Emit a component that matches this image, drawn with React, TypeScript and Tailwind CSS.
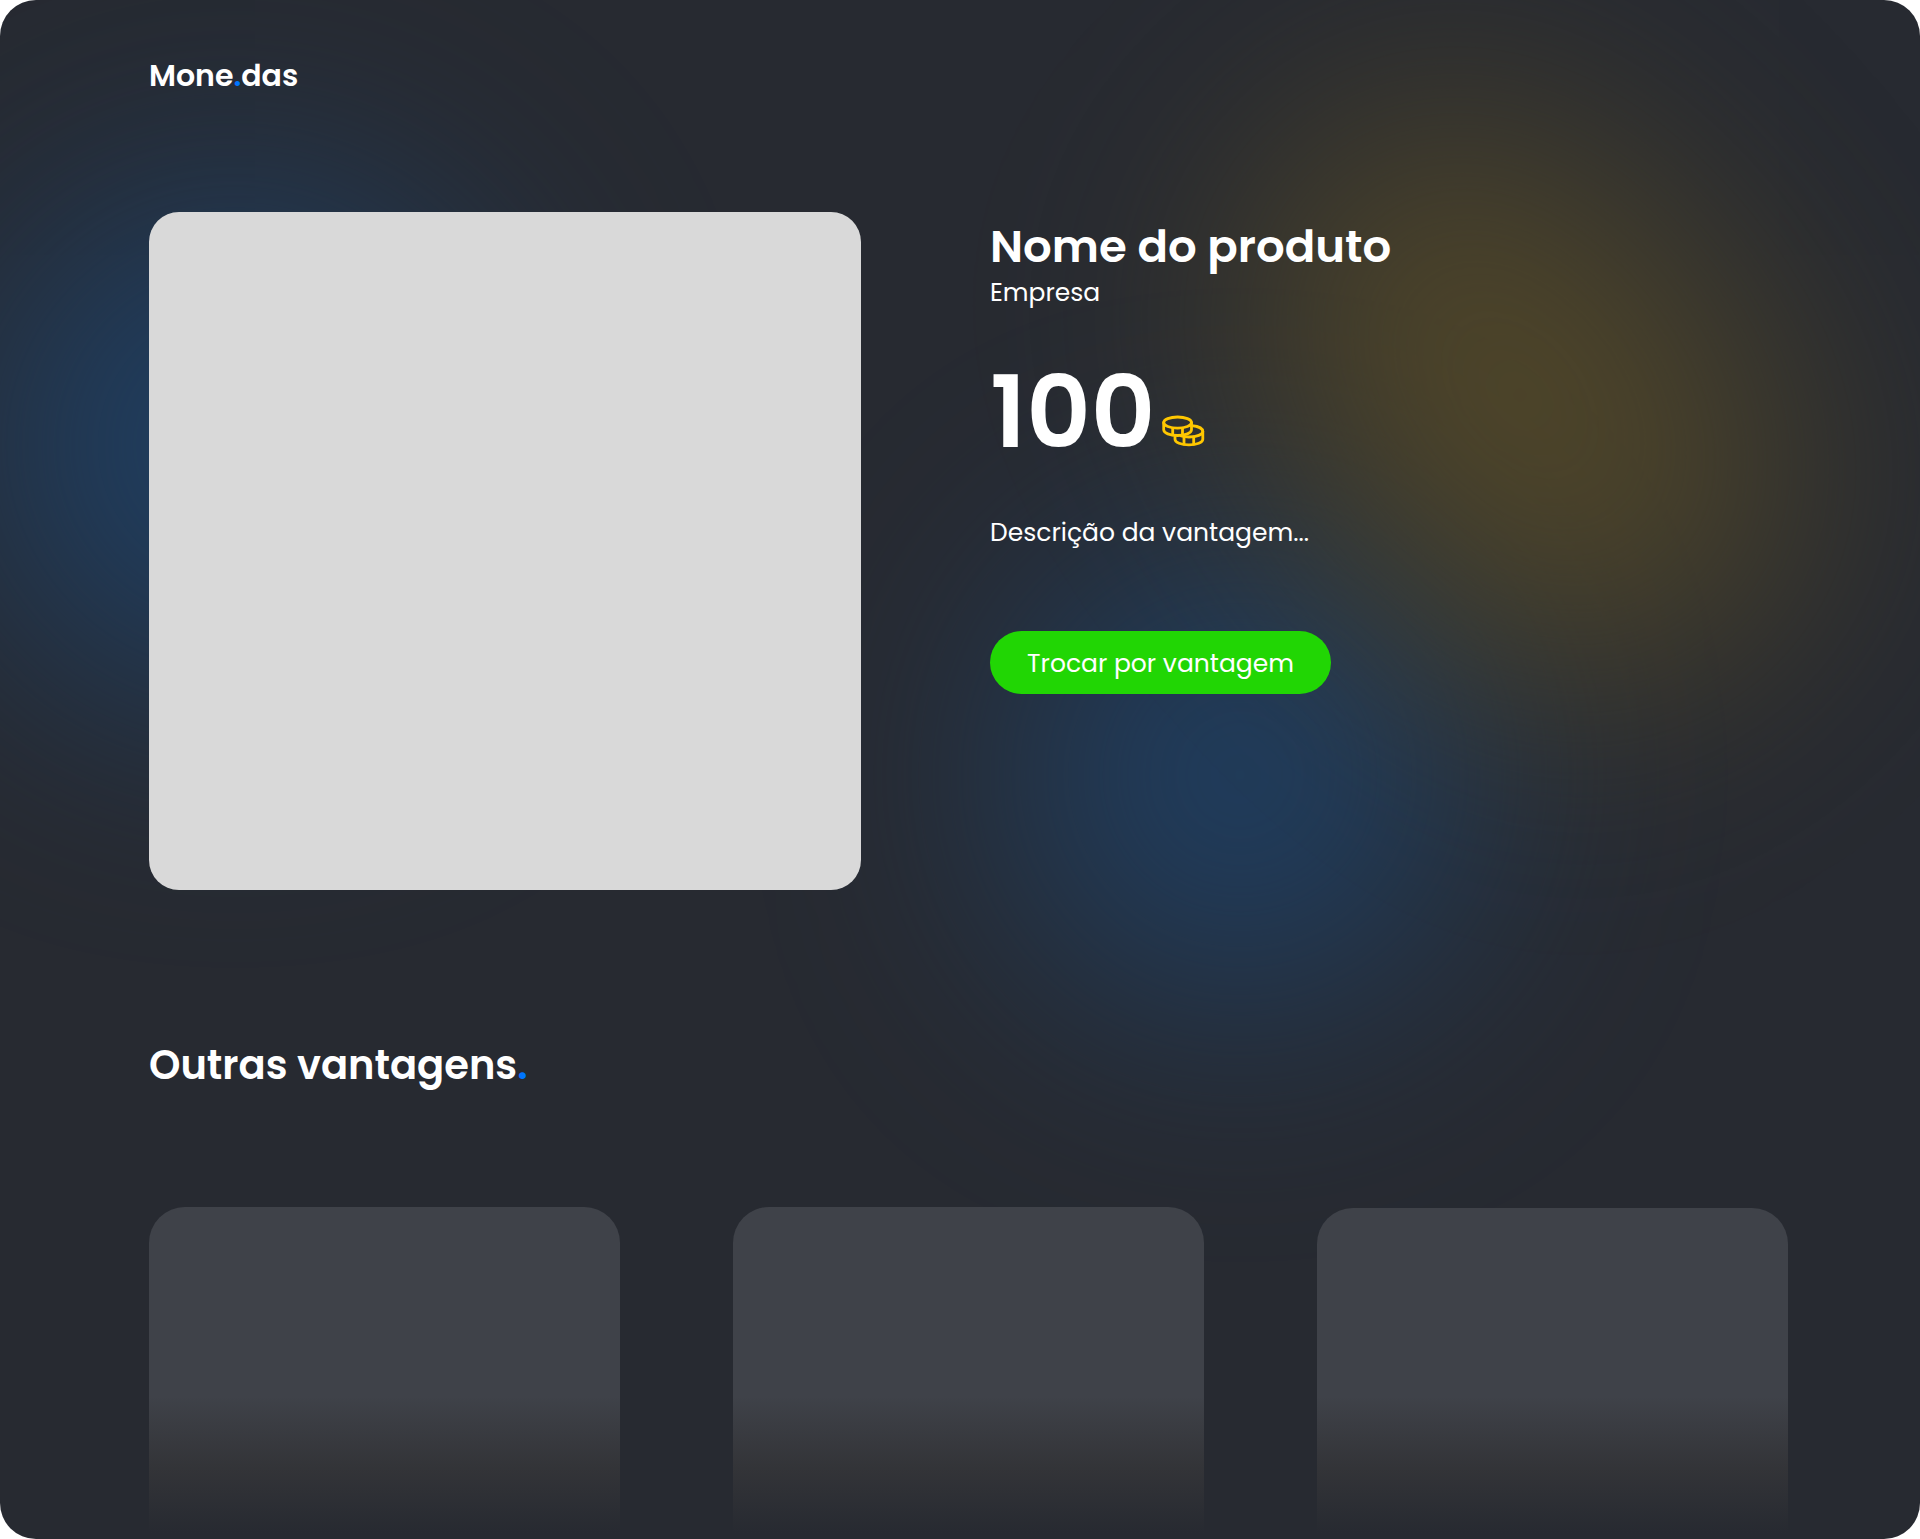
const fontFamily = "font-['Poppins','Inter',sans-serif]";

function Glow({ className }: { className: string }) {
  return <div className={`pointer-events-none absolute rounded-full ${className}`} />;
}

function CoinsIcon() {
  return (
    <svg
      viewBox="0 0 43 32"
      className="h-8 w-[43px] shrink-0"
      fill="none"
      stroke="#ffc700"
      strokeWidth="2.8"
      strokeLinejoin="round"
      strokeLinecap="round"
    >
      <ellipse cx="15.600" cy="7.600" rx="13.900" ry="5.600" />
      <path d="M1.700 7.600v7.200c0 3.200 6.200 5.700 13.900 5.700s13.900-2.500 13.900-5.700V7.600" />
      <path d="M10.700 13.200v6.600M20.500 13.200v6.600" />
      <path d="M29.700 10.700c6.500.6 11.100 2.900 11.100 5.700 0 3.100-6.200 5.600-13.900 5.600-2.900 0-5.600-.4-7.800-1" />
      <path d="M13 20.800v3.400c0 3.200 6.200 5.700 13.900 5.700s13.900-2.500 13.900-5.700v-7.800" />
      <path d="M22 22v7M31.700 22v7" />
    </svg>
  );
}

export default function App() {
  return (
    <div className="bg-white">
      <main
        className={`relative isolate flex h-[1539px] w-[1920px] flex-col overflow-hidden rounded-[36px] bg-[#272a31] px-[149px] text-white ${fontFamily}`}
      >
        <Glow className="-z-10 -left-[20px] top-[190px] h-[510px] w-[510px] bg-[#1c4674] opacity-75 blur-[130px]" />
        <Glow className="-z-10 left-[1010px] top-[545px] h-[460px] w-[460px] bg-[#1c4674] opacity-70 blur-[125px]" />
        <Glow className="-z-10 left-[1210px] top-[190px] h-[410px] w-[620px] rotate-[50deg] bg-[#5d4f26] opacity-75 blur-[125px]" />

        <header className="flex h-[212px] shrink-0 items-start pt-[57px]">
          <span className="text-[30px] leading-[37px] font-semibold">
            Mone<span className="text-[#0075ff]">.</span>das
          </span>
        </header>

        <section className="flex h-[678px] shrink-0 gap-[129px]">
          <div className="h-[678px] w-[712px] shrink-0 rounded-[30px] bg-[#d9d9d9]" />
          <div className="flex flex-col items-start whitespace-nowrap">
            <h1 className="mt-[7px] text-[45px] leading-[56px] font-semibold">Nome do produto</h1>
            <p className="text-[25px] leading-9">Empresa</p>
            <div className="mt-[41px] flex h-[120px] items-end gap-[7px]">
              <span className="text-[100px] leading-[120px] font-semibold">100</span>
              <div className="pb-[25px]">
                <CoinsIcon />
              </div>
            </div>
            <p className="mt-[43px] text-[25px] leading-9">Descrição da vantagem...</p>
            <button className="mt-[80px] h-[63px] w-[341px] rounded-full bg-[#21d604] pt-0.5 text-[25px]">
              Trocar por vantagem
            </button>
          </div>
        </section>

        <h2 className="mt-[150px] text-[40px] leading-[50px] font-semibold">
          Outras vantagens<span className="text-[#0075ff]">.</span>
        </h2>

        <section className="mt-[117px] flex gap-[113px]">
          <div className="h-[326px] w-[471px] shrink-0 rounded-t-[36px] bg-linear-to-b from-[#3f4249] from-58% via-[#333438] via-80% to-[#272a31]" />
          <div className="h-[326px] w-[471px] shrink-0 rounded-t-[36px] bg-linear-to-b from-[#3f4249] from-58% via-[#333438] via-80% to-[#272a31]" />
          <div className="mt-px h-[325px] w-[471px] shrink-0 rounded-t-[36px] bg-linear-to-b from-[#3f4249] from-58% via-[#333438] via-80% to-[#272a31]" />
        </section>
      </main>
    </div>
  );
}
